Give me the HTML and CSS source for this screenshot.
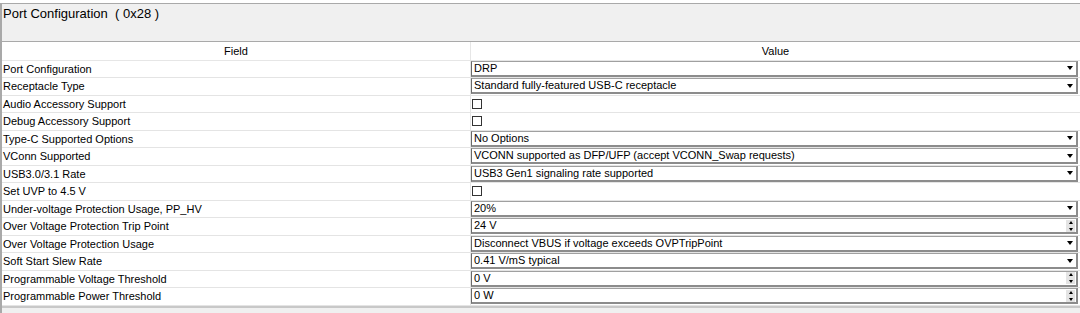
FILE: index.html
```html
<!DOCTYPE html>
<html>
<head>
<meta charset="utf-8">
<link rel="stylesheet" href="styles.css">
</head>
<body>
<div class="panel">
  <div class="title">Port Configuration &nbsp;( 0x28 )</div>
  <div class="grid">
    <div class="hd">Field</div>
    <div class="hd hd-v">Value</div>

    <div class="f">Port Configuration</div>
    <div class="v"><div class="combo"><span>DRP</span><i class="arr"></i></div></div>

    <div class="f">Receptacle Type</div>
    <div class="v"><div class="combo"><span>Standard fully-featured USB-C receptacle</span><i class="arr"></i></div></div>

    <div class="f">Audio Accessory Support</div>
    <div class="v"><i class="chk"></i></div>

    <div class="f">Debug Accessory Support</div>
    <div class="v"><i class="chk"></i></div>

    <div class="f">Type-C Supported Options</div>
    <div class="v"><div class="combo"><span>No Options</span><i class="arr"></i></div></div>

    <div class="f">VConn Supported</div>
    <div class="v"><div class="combo"><span>VCONN supported as DFP/UFP (accept VCONN_Swap requests)</span><i class="arr"></i></div></div>

    <div class="f">USB3.0/3.1 Rate</div>
    <div class="v"><div class="combo"><span>USB3 Gen1 signaling rate supported</span><i class="arr"></i></div></div>

    <div class="f">Set UVP to 4.5 V</div>
    <div class="v"><i class="chk"></i></div>

    <div class="f">Under-voltage Protection Usage, PP_HV</div>
    <div class="v"><div class="combo"><span>20%</span><i class="arr"></i></div></div>

    <div class="f">Over Voltage Protection Trip Point</div>
    <div class="v"><div class="combo"><span>24 V</span><i class="spin"><b class="up"></b><b class="dn"></b></i></div></div>

    <div class="f">Over Voltage Protection Usage</div>
    <div class="v"><div class="combo"><span>Disconnect VBUS if voltage exceeds OVPTripPoint</span><i class="arr"></i></div></div>

    <div class="f">Soft Start Slew Rate</div>
    <div class="v"><div class="combo"><span>0.41 V/mS typical</span><i class="arr"></i></div></div>

    <div class="f">Programmable Voltage Threshold</div>
    <div class="v"><div class="combo"><span>0 V</span><i class="spin"><b class="up"></b><b class="dn"></b></i></div></div>

    <div class="f">Programmable Power Threshold</div>
    <div class="v"><div class="combo"><span>0 W</span><i class="spin"><b class="up"></b><b class="dn"></b></i></div></div>
  </div>
</div>
</body>
</html>
```

FILE: styles.css
```css
html, body {
  margin: 0;
  padding: 0;
}
body {
  width: 1080px;
  height: 313px;
  background: #ffffff;
  font-family: "Liberation Sans", Arial, sans-serif;
  color: #000;
  overflow: hidden;
  padding-top: 3px;
  box-sizing: border-box;
}
.panel {
  background: #f0f0f0;
  border-top: 1px solid #a9a9a9;
  border-left: 2px solid #a9a9a9;
  height: 310px;
  box-sizing: border-box;
}
.title {
  height: 38px;
  font-size: 13px;
  line-height: 20px;
  padding-left: 1px;
  border-bottom: 1px solid #a9a9a9;
  box-sizing: border-box;
  padding-top: 0;
}
.grid {
  display: grid;
  grid-template-columns: 468px 1fr;
  grid-template-rows: 18.5px repeat(14, 17.5px);
  background: #fff;
  border-bottom: 2px solid #c8c8c8;
  font-size: 11px;
}
.hd {
  text-align: center;
  line-height: 17px;
  padding-top: 1px;
  border-bottom: 1px solid #e6e6e6;
}
.hd-v {
  border-left: 1px solid #e6e6e6;
}
.f {
  padding-left: 1px;
  line-height: 17px;
  border-bottom: 1px solid #e4e4e4;
  white-space: nowrap;
}
.v {
  border-left: 1px solid #e4e4e4;
  border-bottom: 1px solid #e4e4e4;
  display: flex;
  align-items: center;
  padding-right: 2px;
}
.combo {
  flex: 1;
  height: 16px;
  box-sizing: border-box;
  background: #fff;
  border-top: 1px solid #a0a0a0;
  border-left: 1px solid #6a6a6a;
  border-bottom: 2px solid #8c8c8c;
  border-right: 2px solid #8c8c8c;
  display: flex;
  align-items: center;
  justify-content: space-between;
  padding-left: 2px;
}
.combo span {
  line-height: 13px;
  white-space: nowrap;
}
.arr {
  width: 0;
  height: 0;
  border-left: 3.5px solid transparent;
  border-right: 3.5px solid transparent;
  border-top: 4px solid #000;
  margin-right: 3px;
}
.spin {
  display: flex;
  flex-direction: column;
  justify-content: space-between;
  align-items: center;
  width: 9px;
  height: 12px;
  background: #e4e4e4;
  margin-right: 1px;
  padding: 1px 0;
  box-sizing: border-box;
}
.spin .up {
  width: 0;
  height: 0;
  border-left: 2.5px solid transparent;
  border-right: 2.5px solid transparent;
  border-bottom: 3px solid #000;
}
.spin .dn {
  width: 0;
  height: 0;
  border-left: 2.5px solid transparent;
  border-right: 2.5px solid transparent;
  border-top: 3px solid #000;
}
.chk {
  width: 10px;
  height: 10px;
  box-sizing: border-box;
  border: 1px solid #333;
  background: #fff;
  margin-left: 1px;
}
```
